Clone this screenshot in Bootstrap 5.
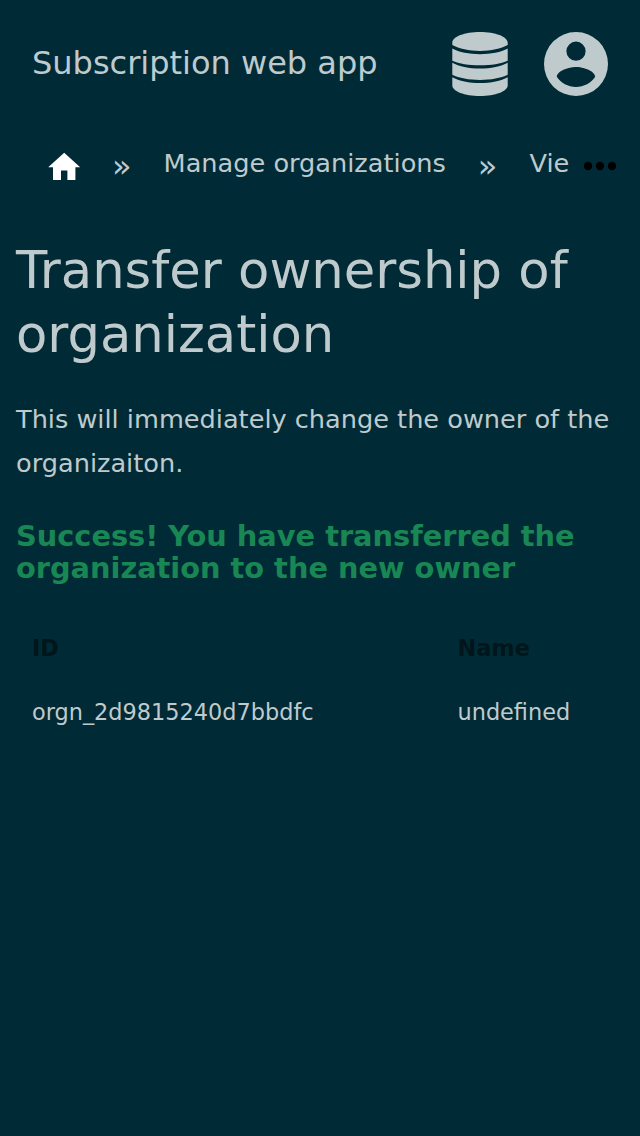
<!DOCTYPE html>
<html lang="en">
<head>
<meta charset="utf-8">
<meta name="viewport" content="width=device-width, initial-scale=1">
<title>Subscription web app</title>
<link rel="stylesheet" href="https://cdn.jsdelivr.net/npm/bootstrap@5.3.0/dist/css/bootstrap.min.css">
<style>
body { background: #002b36; color: #bfcacd; font-family: "DejaVu Sans", sans-serif; font-size: 25.6px; }
.app-bar { height: 128px; padding: 0 32px; }
.app-title { font-size: 32px; color: inherit; line-height: 48px; padding-bottom: 2px; }
.tools { gap: 32px; }
.crumbs { height: 72px; padding: 0 22px 0 45px; }
.crumbs ol { font-size: 25.6px; line-height: 38px; height: 48px; padding-top: 4px; }
.crumbs svg { margin-top: 4px; }
.crumbs .home-icon { margin: 4px -3.4px 0 0; }
.crumbs .sep { font-size: 32px; padding: 3px 32px 0; }
.page-title { font-size: 51.2px; line-height: 64px; font-weight: 400; margin: 38px 0 31px; }
.intro { line-height: 44px; margin-bottom: 35px; }
.notice { color: #198754; font-size: 28.8px; line-height: 32px; font-weight: 700; margin-bottom: 32px; }
.orgs { font-size: 22.4px; line-height: 32px; --bs-table-bg: transparent; color: #bfcacd; }
.orgs > :not(caption) > * > * { padding: 16px; border: 0; color: #bfcacd; }
.orgs > thead > tr > th { color: #00161b; }
.orgs th:first-child { width: 425.5px; }
</style>
</head>
<body>
<header class="app-bar d-flex align-items-center justify-content-between">
  <a class="app-title text-decoration-none" href="#">Subscription web app</a>
  <div class="tools d-flex align-items-center">
    <svg width="64" height="64" viewBox="0 0 64 64" fill="currentColor" aria-label="Data"><path d="M32 0C47.300 0 59.700 4.700 59.700 10.500V13C53 16.800 43 18.900 32 18.900S11 16.800 4.300 13V10.500C4.300 4.700 16.700 0 32 0zM4.300 16.500C11 20.100 21 22.200 32 22.200s21-2.100 27.700-5.700v12.200C53 31.900 43 33.200 32 33.200s-21-1.300-27.700-4.500zM4.300 30.700C11 34.500 21 36.600 32 36.600s21-2.100 27.700-5.900v12.100C53 46.200 43 47.900 32 47.900s-21-1.700-27.700-5.100zM4.300 45.200C11 49 21 51.100 32 51.100s21-2.100 27.700-5.900V53.500C59.700 59.300 47.300 64 32 64S4.300 59.300 4.300 53.500z"/></svg>
    <svg width="64" height="64" viewBox="2 2 20 20" fill="currentColor" aria-label="Account"><path d="M12 19.200C9.500 19.200 7.290 17.920 6 16c.03-2 4-3.100 6-3.100s5.970 1.100 6 3.100c-1.290 1.920-3.500 3.200-6 3.200M12 5a3 3 0 0 1 3 3 3 3 0 0 1-3 3 3 3 0 0 1-3-3 3 3 0 0 1 3-3m0-3A10 10 0 0 0 2 12a10 10 0 0 0 10 10 10 10 0 0 0 10-10A10 10 0 0 0 12 2z"/></svg>
  </div>
</header>
<nav class="crumbs d-flex align-items-center justify-content-between" aria-label="breadcrumb">
  <ol class="list-unstyled d-flex mb-0 overflow-hidden text-nowrap">
    <li><svg class="home-icon d-block" width="38.400" height="38.400" viewBox="0 0 24 24" fill="#fff"><path d="M10 20v-6h4v6h5v-8h3L12 3 2 12h3v8z"/></svg></li>
    <li class="sep">»</li>
    <li>Manage organizations</li>
    <li class="sep">»</li>
    <li>Vie</li>
  </ol>
  <svg width="36" height="10" viewBox="0 0 36 10" aria-label="More"><circle cx="6" cy="5" r="4.200"/><circle cx="18" cy="5" r="4.200"/><circle cx="30" cy="5" r="4.200"/></svg>
</nav>
<main class="px-3">
  <h1 class="page-title">Transfer ownership of organization</h1>
  <p class="intro">This will immediately change the owner of the organizaiton.</p>
  <h2 class="notice">Success! You have transferred the organization to the new owner</h2>
  <table class="table orgs">
    <thead><tr><th>ID</th><th>Name</th></tr></thead>
    <tbody><tr><td>orgn_2d9815240d7bbdfc</td><td>undefined</td></tr></tbody>
  </table>
</main>
<script src="https://cdn.jsdelivr.net/npm/bootstrap@5.3.0/dist/js/bootstrap.bundle.min.js"></script>
</body>
</html>
